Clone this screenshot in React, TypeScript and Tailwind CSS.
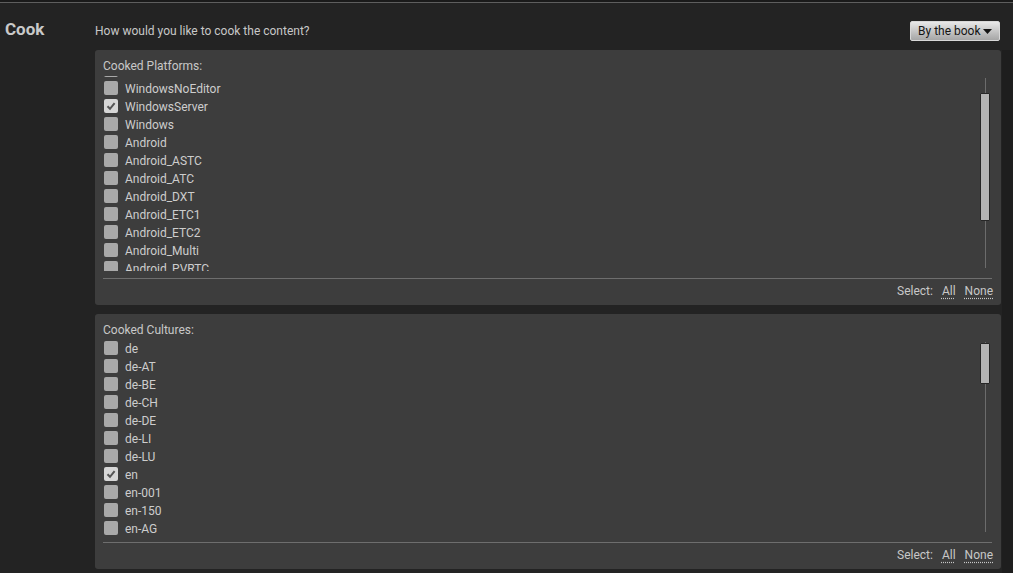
import React from 'react';

const platforms = [
  { name: "WindowsClient", checked: false },
  { name: "WindowsNoEditor", checked: false },
  { name: "WindowsServer", checked: true },
  { name: "Windows", checked: false },
  { name: "Android", checked: false },
  { name: "Android_ASTC", checked: false },
  { name: "Android_ATC", checked: false },
  { name: "Android_DXT", checked: false },
  { name: "Android_ETC1", checked: false },
  { name: "Android_ETC2", checked: false },
  { name: "Android_Multi", checked: false },
  { name: "Android_PVRTC", checked: false },
];

const cultures = [
  { name: "de", checked: false },
  { name: "de-AT", checked: false },
  { name: "de-BE", checked: false },
  { name: "de-CH", checked: false },
  { name: "de-DE", checked: false },
  { name: "de-LI", checked: false },
  { name: "de-LU", checked: false },
  { name: "en", checked: true },
  { name: "en-001", checked: false },
  { name: "en-150", checked: false },
  { name: "en-AG", checked: false },
  { name: "en-AI", checked: false },
];

const CheckBox: React.FC<{ checked: boolean }> = ({ checked }) => (
  <div
    className={
      "mt-[2px] w-[14px] h-[14px] rounded-[2px] flex items-center justify-center shrink-0 " +
      (checked ? "bg-[#d6d6d6]" : "bg-[#a9a9a9]")
    }
  >
    {checked && (
      <svg width="10" height="10" viewBox="0 0 10 10">
        <path d="M1.5 5.2 L4 7.8 L8.6 2.2" fill="none" stroke="#555555" strokeWidth="2" />
      </svg>
    )}
  </div>
);

interface ListPanelProps {
  title: string;
  items: { name: string; checked: boolean }[];
  offset: string; // scroll offset class
  thumbTop: string;
  thumbHeight: string;
}

const ListPanel: React.FC<ListPanelProps> = ({ title, items, offset, thumbTop, thumbHeight }) => (
  <div className="bg-[#3d3d3d] rounded-[3px] pt-[9px] pb-[4px]">
    <div className="pl-[8px] h-[14px] leading-[14px] text-[12px] text-[#c8c8c8]">{title}</div>
    <div className="mt-[3px] h-[195px] flex pr-[11px]">
      <div className="flex-1 overflow-hidden">
        <div className={offset}>
          {items.map((it) => (
            <div key={it.name} className="h-[18px] flex items-start pl-[9px]">
              <CheckBox checked={it.checked} />
              <span className="ml-[7px] mt-px text-[12px] text-[#cdcdcd] leading-[18px]">{it.name}</span>
            </div>
          ))}
        </div>
      </div>
      <div className="w-[10px] relative">
        <div className="absolute left-[5px] top-[2px] bottom-[3px] w-px bg-[#6c6c6c]" />
        <div className={"relative w-[10px] bg-[#b3b3b3] border border-[#262626] rounded-[1px] " + thumbTop + " " + thumbHeight} />
      </div>
    </div>
    <div className="mt-[7px] h-px bg-[#6e6e6e] ml-[8px] mr-[9px]" />
    <div className="mt-[2px] h-[20px] flex items-center justify-end pr-[8px] text-[12px] text-[#c8c8c8]">
      <span>Select:</span>
      <span className="ml-[9px] underline decoration-dotted underline-offset-[3px]">All</span>
      <span className="ml-[9px] underline decoration-dotted underline-offset-[3px]">None</span>
    </div>
  </div>
);

export default function App() {
  return (
    <div className="w-[1013px] h-[573px] bg-[#232323] flex flex-col overflow-hidden font-['Roboto',sans-serif]">
      <div className="h-[2px] bg-[#1a1a1a]" />
      <div className="h-px bg-[#5e5e5e]" />
      <div className="flex flex-1">
        <div className="w-[95px] pl-[5px] pt-[15px]">
          <div className="text-[17px] font-bold text-[#c9c9c9] leading-[22px]">Cook</div>
        </div>
        <div className="flex-1 flex flex-col">
          <div className="flex items-center justify-between pt-[18px] pr-[13px] w-[918px]">
            <span className="text-[12px] text-[#c8c8c8]">How would you like to cook the content?</span>
            <div className="h-[20px] w-[90px] flex items-center pl-[7px] rounded-[2px] border border-[#d8d8d8] bg-gradient-to-b from-[#e8e8e8] to-[#a6a6a6] text-[12px] text-[#141414]">
              <span>By the book</span>
              <svg className="ml-[2px]" width="9" height="5" viewBox="0 0 9 5">
                <path d="M0 0 L9 0 L4.5 5 Z" fill="#141414" />
              </svg>
            </div>
          </div>
          <div className="flex flex-1 mt-[9px]">
            <div className="w-[906px] flex flex-col gap-[9px]">
              <ListPanel title="Cooked Platforms:" items={platforms} offset="-mt-[15px]" thumbTop="mt-[17px]" thumbHeight="h-[128px]" />
              <ListPanel title="Cooked Cultures:" items={cultures} offset="-mt-[1px]" thumbTop="mt-[3px]" thumbHeight="h-[41px]" />
            </div>
            <div className="flex-1 bg-[#1e1e1e] ml-px" />
          </div>
        </div>
      </div>
    </div>
  );
}
